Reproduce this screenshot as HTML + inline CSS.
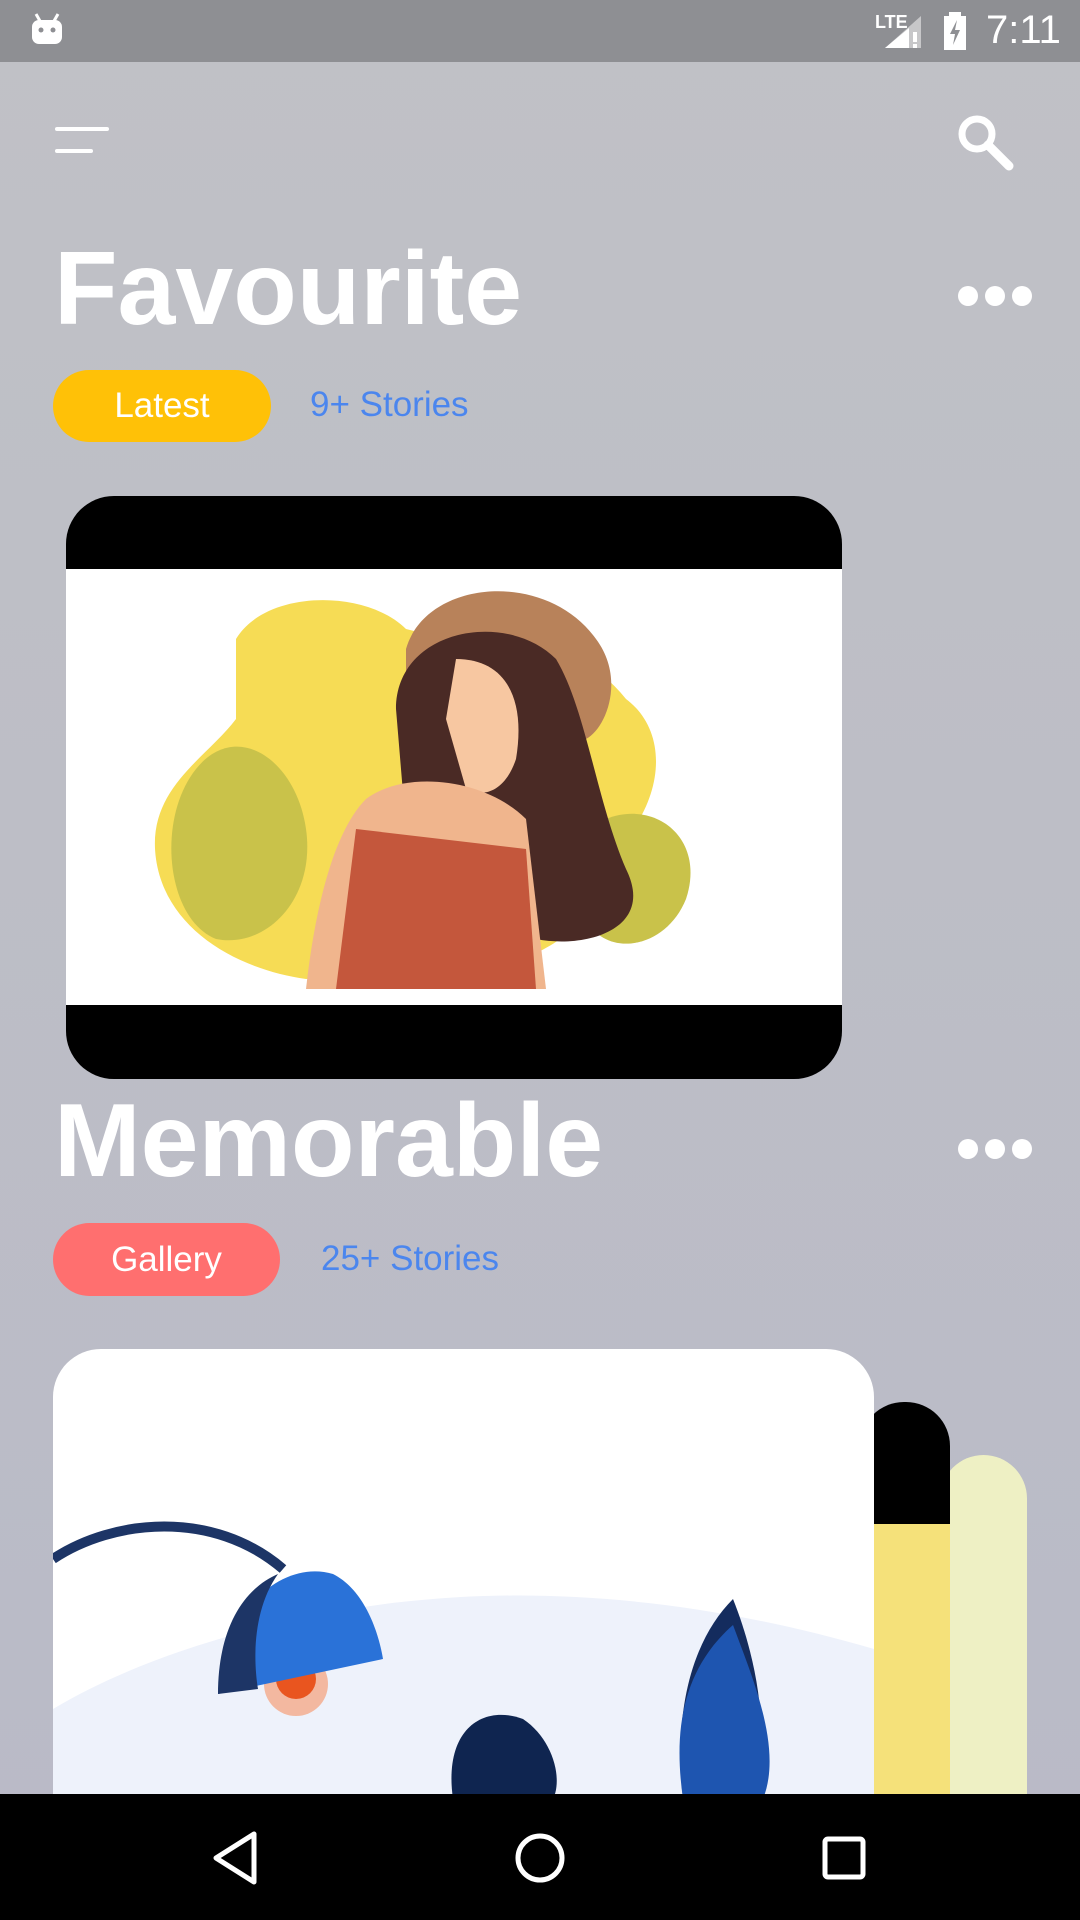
<!DOCTYPE html>
<html><head><meta charset="utf-8"><style>
*{margin:0;padding:0;box-sizing:border-box}
body{width:1080px;height:1920px;overflow:hidden;position:relative;font-family:"Liberation Sans",sans-serif;background:linear-gradient(#c0c1c6,#b9bac7)}
.abs{position:absolute}
.title{position:absolute;left:54px;font-weight:bold;font-size:104px;color:#fff;letter-spacing:0}
.dots{position:absolute;left:958px;width:74px;height:20px}
.dots i{position:absolute;top:0;width:20px;height:20px;border-radius:50%;background:#fff}
.pill{position:absolute;border-radius:37px;color:#fff;font-size:35px;text-align:center}
.stories{position:absolute;color:#4b86ee;font-size:35px}
</style></head><body>
<div class="abs" style="left:0;top:0;width:1080px;height:62px;background:#8e8f93"></div>
<svg class="abs" style="left:30px;top:12px" width="34" height="34" viewBox="0 0 34 34"><rect x="2" y="8" width="30" height="24" rx="7" fill="#fff"/><line x1="6" y1="2" x2="10" y2="9" stroke="#fff" stroke-width="3"/><line x1="28" y1="2" x2="24" y2="9" stroke="#fff" stroke-width="3"/><circle cx="11" cy="18" r="2.5" fill="#8e8f93"/><circle cx="23" cy="18" r="2.5" fill="#8e8f93"/></svg>
<div class="abs" style="left:875px;top:12px;color:#fff;font-size:18px;font-weight:bold">LTE</div>
<svg class="abs" style="left:883px;top:14px" width="40" height="36"><polygon points="38,2 38,34 2,34" fill="#fff" opacity=".5"/><polygon points="26,14 26,34 2,34" fill="#fff"/><rect x="30" y="18" width="4" height="10" fill="#fff"/><rect x="30" y="30" width="4" height="4" fill="#fff"/></svg>
<svg class="abs" style="left:942px;top:12px" width="26" height="38"><rect x="7" y="0" width="12" height="4" fill="#fff"/><rect x="2" y="4" width="22" height="34" fill="#fff"/><polygon points="15,8 8,22 13,22 11,33 18,18 13,18" fill="#8e8f93"/></svg>
<div class="abs" style="left:986px;top:8px;color:#fff;font-size:40px">7:11</div>

<svg class="abs" style="left:55px;top:126px" width="54" height="30"><line x1="2" y1="3" x2="52" y2="3" stroke="#fff" stroke-width="4" stroke-linecap="round"/><line x1="2" y1="25" x2="36" y2="25" stroke="#fff" stroke-width="4" stroke-linecap="round"/></svg>
<svg class="abs" style="left:955px;top:112px" width="60" height="60"><circle cx="22" cy="22" r="15" fill="none" stroke="#fff" stroke-width="7"/><line x1="33" y1="33" x2="54" y2="54" stroke="#fff" stroke-width="9" stroke-linecap="round"/></svg>

<div class="title" style="top:230px">Favourite</div>
<div class="dots" style="top:286px"><i style="left:0"></i><i style="left:27px"></i><i style="left:54px"></i></div>
<div class="pill" style="left:53px;top:370px;width:218px;height:72px;line-height:72px;background:#ffc107">Latest</div>
<div class="stories" style="left:310px;top:385px">9+ Stories</div>

<div class="abs" style="left:66px;top:496px;width:776px;height:583px;background:#000;border-radius:48px;overflow:hidden">
 <div class="abs" style="left:0;top:73px;width:776px;height:436px;background:#fff">
  <svg width="776" height="436" viewBox="0 0 776 436">
   <path d="M170,70 C200,20 300,20 340,60 L380,70 C460,60 520,80 560,130 C600,160 600,220 560,270 C540,320 520,380 420,400 L240,410 C170,400 100,360 90,290 C80,220 140,190 170,150 Z" fill="#f6dc55"/>
   <path d="M130,200 C170,150 230,190 240,260 C250,330 200,380 150,370 C100,350 90,250 130,200Z" fill="#c9c24a"/>
   <path d="M540,250 C590,230 640,270 620,330 C600,380 540,390 520,350Z" fill="#c9c24a"/>
   <path d="M340,80 C360,10 480,0 530,70 C560,110 540,160 520,170 L340,150Z" fill="#b8825a"/>
   <path d="M330,140 C330,60 440,40 490,90 C520,140 530,230 560,300 C590,360 520,380 470,370 L340,260Z" fill="#4a2a25"/>
   <path d="M390,90 C440,90 460,130 450,190 C440,220 420,230 400,220 L380,150Z" fill="#f7c7a1"/>
   <path d="M300,230 C340,200 420,210 460,250 L480,420 L240,420 C250,330 270,260 300,230Z" fill="#f0b58d"/>
   <path d="M290,260 L460,280 L470,420 L270,420Z" fill="#c4573c"/>
  </svg>
 </div>
</div>

<div class="title" style="top:1082px">Memorable</div>
<div class="dots" style="top:1139px"><i style="left:0"></i><i style="left:27px"></i><i style="left:54px"></i></div>
<div class="pill" style="left:53px;top:1223px;width:227px;height:73px;line-height:73px;background:#ff6f6f">Gallery</div>
<div class="stories" style="left:321px;top:1239px">25+ Stories</div>

<div class="abs" style="left:940px;top:1455px;width:87px;height:400px;background:#eef0c4;border-radius:44px 44px 0 0"></div>
<div class="abs" style="left:860px;top:1402px;width:90px;height:400px;background:#000;border-radius:44px 44px 0 0;overflow:hidden"><div class="abs" style="left:0;top:122px;width:90px;height:300px;background:#f5e17a"></div></div>
<div class="abs" style="left:53px;top:1349px;width:821px;height:500px;background:#fff;border-radius:48px 48px 0 0;overflow:hidden">
 <svg width="821" height="450" viewBox="0 0 821 450">
  <path d="M0,360 C100,300 250,260 380,250 C500,240 650,250 821,300 L821,450 L0,450Z" fill="#eef2fb"/>
  <path d="M0,210 C60,170 160,160 230,220" fill="none" stroke="#1d3566" stroke-width="10"/>
  <circle cx="243" cy="335" r="32" fill="#f3b8a0"/><circle cx="243" cy="330" r="20" fill="#e9551f"/>
  <path d="M165,345 C170,260 230,210 280,225 C310,240 325,280 330,310Z" fill="#2a72d8"/>
  <path d="M165,345 C165,280 190,240 225,225 C200,260 200,310 205,340Z" fill="#1d3566"/>
  <path d="M400,450 C390,380 430,355 470,370 C500,390 510,430 500,450Z" fill="#0f2550"/>
  <path d="M630,450 C620,360 640,290 680,250 C700,300 720,380 700,450Z" fill="#142c5e"/>
  <path d="M630,450 C620,380 630,320 680,276 C700,330 730,400 710,450Z" fill="#1e55b0"/>
 </svg>
</div>

<div class="abs" style="left:0;top:1794px;width:1080px;height:126px;background:#000"></div>
<svg class="abs" style="left:210px;top:1830px" width="50" height="56"><polygon points="44,4 44,52 6,28" fill="none" stroke="#fff" stroke-width="5" stroke-linejoin="round"/></svg>
<svg class="abs" style="left:514px;top:1832px" width="52" height="52"><circle cx="26" cy="26" r="22" fill="none" stroke="#fff" stroke-width="5"/></svg>
<svg class="abs" style="left:822px;top:1836px" width="44" height="44"><rect x="3" y="3" width="38" height="38" rx="3" fill="none" stroke="#fff" stroke-width="5"/></svg>
</body></html>
